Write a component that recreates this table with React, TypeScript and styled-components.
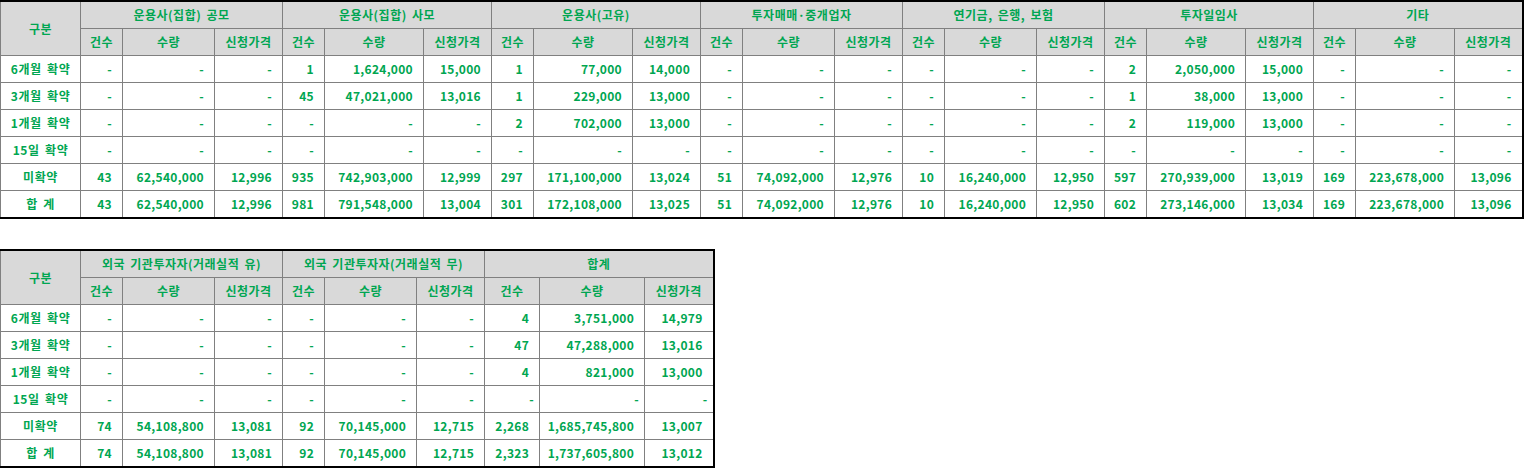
import styled, { createGlobalStyle } from 'styled-components';

const GlobalStyle = createGlobalStyle`
  html, body {
    margin: 0;
    padding: 0;
    background: #ffffff;
  }
  body {
    font-family: "Noto Sans CJK KR", "Noto Sans", sans-serif;
  }
`;

const Page = styled.div`
  display: flex;
  flex-direction: column;
  align-items: flex-start;
  gap: 30px;
`;

const Table = styled.table<{ $width: number }>`
  border-collapse: collapse;
  table-layout: fixed;
  width: ${({ $width }) => $width}px;
  border-top: 2px solid #000;
  border-bottom: 2px solid #000;
  border-left: 1px solid #000;
  border-right: 2px solid #000;
  color: #00a651;
  font-size: 12px;
  font-weight: 700;
  line-height: 14px;
  word-spacing: 2px;
`;

const HeadCell = styled.th`
  background: #d9d9d9;
  border: 1px solid #808080;
  height: 26px;
  padding: 0;
  font-weight: 700;
  text-align: center;
  white-space: nowrap;
  letter-spacing: 0.5px;
`;

const LabelCell = styled.td`
  border: 1px solid #808080;
  height: 26px;
  padding: 0;
  text-align: center;
  white-space: nowrap;
  letter-spacing: 0.6px;
`;

const NumCell = styled.td<{ $tight?: boolean }>`
  border: 1px solid #808080;
  height: 26px;
  padding: 0 ${({ $tight }) => ($tight ? 5 : 10)}px 0 0;
  text-align: right;
  white-space: nowrap;
  letter-spacing: 0.3px;
`;

type Row = { label: string; values: string[]; tightFrom?: number };

type Spec = {
  groups: string[];
  cols: number[];
  rows: Row[];
};

const D = ['-', '-', '-'];

const first: Spec = {
  groups: [
    '운용사(집합) 공모',
    '운용사(집합) 사모',
    '운용사(고유)',
    '투자매매·중개업자',
    '연기금, 은행, 보험',
    '투자일임사',
    '기타',
  ],
  cols: [80, 42, 92, 68, 42, 99, 68, 42, 99, 68, 42, 92, 68, 42, 92, 68, 42, 99, 68, 42, 99, 68],
  rows: [
    { label: '6개월 확약', values: [...D, '1', '1,624,000', '15,000', '1', '77,000', '14,000', ...D, ...D, '2', '2,050,000', '15,000', ...D] },
    { label: '3개월 확약', values: [...D, '45', '47,021,000', '13,016', '1', '229,000', '13,000', ...D, ...D, '1', '38,000', '13,000', ...D] },
    { label: '1개월 확약', values: [...D, ...D, '2', '702,000', '13,000', ...D, ...D, '2', '119,000', '13,000', ...D] },
    { label: '15일 확약', values: [...D, ...D, ...D, ...D, ...D, ...D, ...D] },
    { label: '미확약', values: ['43', '62,540,000', '12,996', '935', '742,903,000', '12,999', '297', '171,100,000', '13,024', '51', '74,092,000', '12,976', '10', '16,240,000', '12,950', '597', '270,939,000', '13,019', '169', '223,678,000', '13,096'] },
    { label: '합 계', values: ['43', '62,540,000', '12,996', '981', '791,548,000', '13,004', '301', '172,108,000', '13,025', '51', '74,092,000', '12,976', '10', '16,240,000', '12,950', '602', '273,146,000', '13,034', '169', '223,678,000', '13,096'] },
  ],
};

const second: Spec = {
  groups: ['외국 기관투자자(거래실적 유)', '외국 기관투자자(거래실적 무)', '합계'],
  cols: [80, 42, 92, 68, 42, 92, 68, 55, 105, 69],
  rows: [
    { label: '6개월 확약', values: [...D, ...D, '4', '3,751,000', '14,979'] },
    { label: '3개월 확약', values: [...D, ...D, '47', '47,288,000', '13,016'] },
    { label: '1개월 확약', values: [...D, ...D, '4', '821,000', '13,000'] },
    { label: '15일 확약', values: [...D, ...D, ...D], tightFrom: 6 },
    { label: '미확약', values: ['74', '54,108,800', '13,081', '92', '70,145,000', '12,715', '2,268', '1,685,745,800', '13,007'] },
    { label: '합 계', values: ['74', '54,108,800', '13,081', '92', '70,145,000', '12,715', '2,323', '1,737,605,800', '13,012'] },
  ],
};

const SUB = ['건수', '수량', '신청가격'];

const AllotmentTable = ({ spec }: { spec: Spec }) => {
  const width = spec.cols.reduce((a, b) => a + b, 0);
  return (
    <Table $width={width}>
      <colgroup>
        {spec.cols.map((w, i) => (
          <col key={i} style={{ width: w }} />
        ))}
      </colgroup>
      <thead>
        <tr>
          <HeadCell rowSpan={2}>구분</HeadCell>
          {spec.groups.map((g) => (
            <HeadCell key={g} colSpan={3}>
              {g}
            </HeadCell>
          ))}
        </tr>
        <tr>
          {spec.groups.map((g) =>
            SUB.map((s) => <HeadCell key={g + s}>{s}</HeadCell>)
          )}
        </tr>
      </thead>
      <tbody>
        {spec.rows.map((r) => (
          <tr key={r.label}>
            <LabelCell>{r.label}</LabelCell>
            {r.values.map((v, i) => (
              <NumCell key={i} $tight={r.tightFrom !== undefined && i >= r.tightFrom}>
                {v}
              </NumCell>
            ))}
          </tr>
        ))}
      </tbody>
    </Table>
  );
};

const App = () => (
  <>
    <GlobalStyle />
    <Page>
      <AllotmentTable spec={first} />
      <AllotmentTable spec={second} />
    </Page>
  </>
);

export default App;
